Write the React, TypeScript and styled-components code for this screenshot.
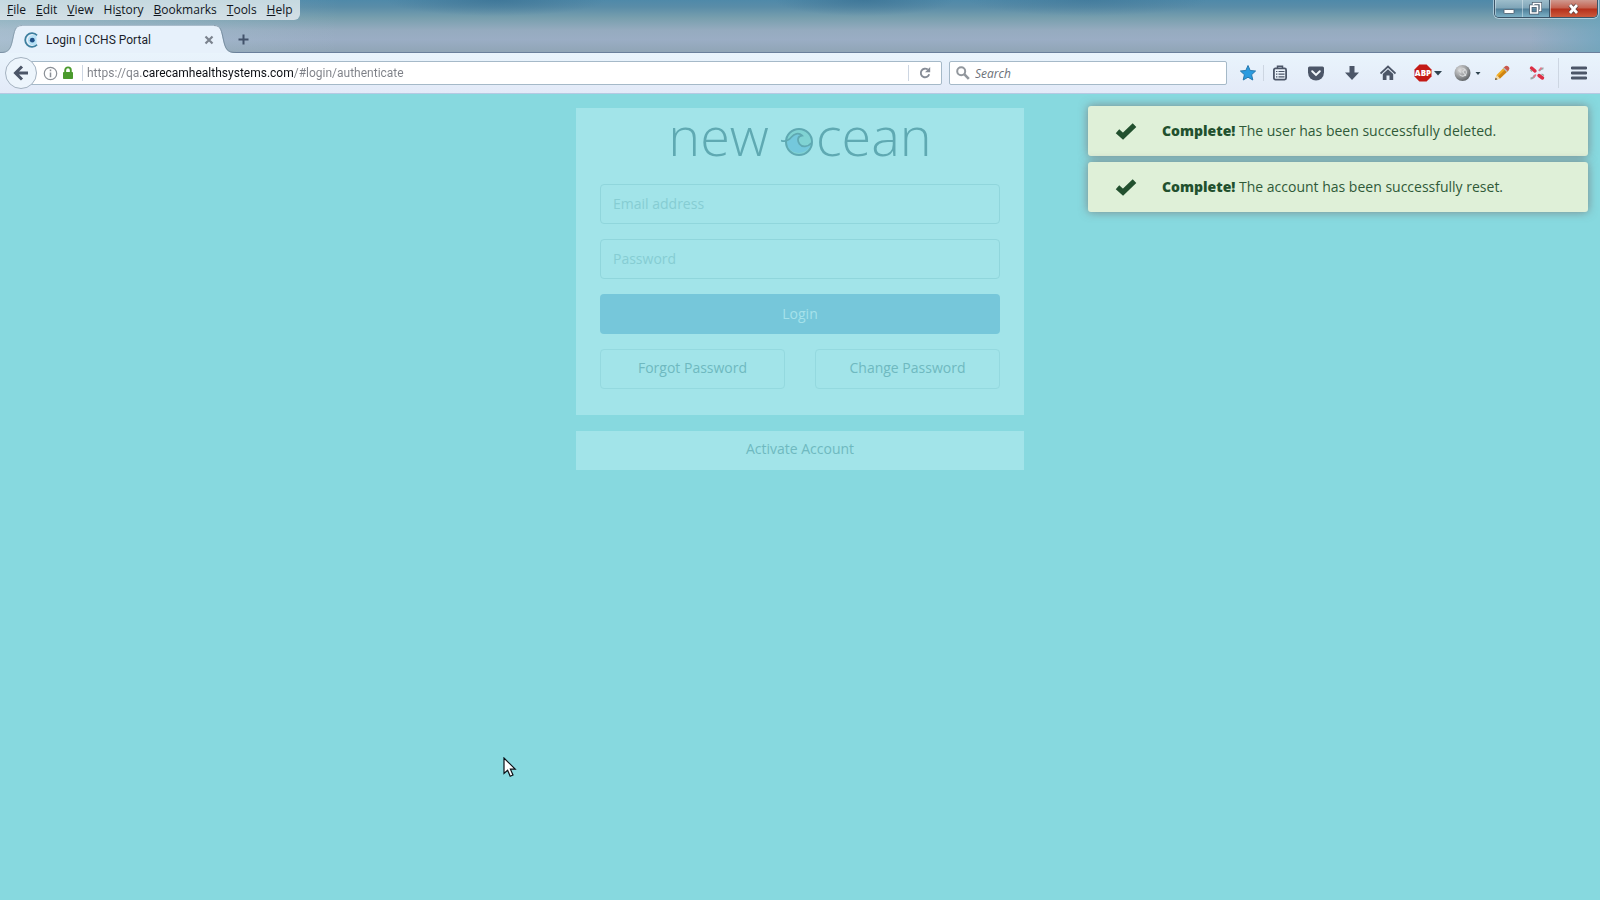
import React from "react";
import styled, { createGlobalStyle } from "styled-components";

const GlobalStyle = createGlobalStyle`
  *, *::before, *::after { box-sizing: border-box; }
  body {
    margin: 0;
    font-family: "Open Sans", "Noto Sans", sans-serif;
    font-size: 14px;
    background: #87d9df;
  }
  button, input { font-family: inherit; margin: 0; }
`;

/* ---------- browser frame ---------- */

const CHROME_FONT = `Roboto, "Open Sans", sans-serif`;

const Window = styled.div`
  display: flex;
  flex-direction: column;
  min-height: 100vh;
  overflow: hidden;
`;

const TitleBar = styled.header`
  height: 53px;
  border-bottom: 1px solid #6a7f9b;
  background:
    linear-gradient(90deg, rgba(190, 215, 225, 0.4) 0, rgba(190, 215, 225, 0) 340px),
    linear-gradient(90deg, rgba(105, 165, 190, 0) calc(100% - 70px), rgba(105, 165, 190, 0.7) 100%),
    radial-gradient(110px 16px at 31% 0, rgba(50, 105, 140, 0.55), rgba(50, 105, 140, 0)),
    radial-gradient(90px 16px at 54% 0, rgba(50, 105, 140, 0.55), rgba(50, 105, 140, 0)),
    radial-gradient(120px 16px at 68% 0, rgba(50, 105, 140, 0.4), rgba(50, 105, 140, 0)),
    linear-gradient(180deg, #4f89a9 0, #5a8da8 7px, #789fae 18px, #95abbf 30px, #9aadc4 40px, #90a5b6 52px);
`;

const TopRow = styled.div`
  display: flex;
  justify-content: space-between;
  align-items: flex-start;
  height: 20px;
`;

const MenuBar = styled.nav`
  display: flex;
  height: 20px;
  padding: 0 2px;
  border-radius: 0 0 6px 0;
  background: linear-gradient(180deg, #c5d9e0, #d3dfe5);
`;

const MenuButton = styled.button`
  border: 0;
  padding: 0 5px;
  background: none;
  font-size: 12px;
  line-height: 20px;
  color: #10151c;
`;

const WindowControls = styled.div`
  display: flex;
  height: 18px;
  margin-right: 2px;
  border: 1px solid #3b5468;
  border-top: 0;
  border-radius: 0 0 5px 5px;
  overflow: hidden;
  box-shadow: 0 0 0 1px rgba(215, 235, 245, 0.6);
`;

const ControlButton = styled.button<{ $close?: boolean }>`
  display: grid;
  place-items: center;
  width: ${(p) => (p.$close ? 48 : 27)}px;
  padding: 0;
  border: 0;
  border-left: ${(p) => (p.$close ? 1 : 0)}px solid #3b5468;
  background: ${(p) =>
    p.$close
      ? "linear-gradient(180deg, #cf9a90 0, #c4604e 8px, #b5301b 9px, #cc5a3c 17px)"
      : "linear-gradient(180deg, #9dbdcb 0, #7fa5b8 8px, #4f7f99 9px, #7cb0c5 17px)"};
  box-shadow: inset 1px 0 rgba(225, 240, 245, 0.5);
`;

const TabStrip = styled.div`
  display: flex;
  align-items: flex-end;
  height: 33px;
`;

const Tab = styled.div`
  display: flex;
  align-items: stretch;
  height: 28px;
`;

const TabEdge = styled.svg`
  display: block;
  width: 22px;
  height: 28px;
`;

const TabBody = styled.div`
  display: flex;
  align-items: center;
  width: 192px;
  padding-left: 2px;
  border-top: 1px solid #a9bccb;
  background: #e7f1fb;
`;

const TabTitle = styled.span`
  flex: 1;
  margin-left: 6px;
  font-family: ${CHROME_FONT};
  font-size: 12px;
  line-height: 16px;
  color: #1b1f2c;
`;

const PlainButton = styled.button`
  display: grid;
  place-items: center;
  padding: 0;
  border: 0;
  background: none;
`;

const NewTab = styled(PlainButton)`
  width: 14px;
  height: 28px;
`;

const Toolbar = styled.div`
  display: flex;
  align-items: center;
  height: 41px;
  padding: 0 1px 0 5px;
  border-bottom: 1px solid #b6c9e3;
  background: linear-gradient(180deg, #e9f4fc, #e3eaf8);
`;

const BackButton = styled(PlainButton)`
  z-index: 1;
  flex: none;
  width: 32px;
  height: 32px;
  border: 1px solid #a4b2c0;
  border-radius: 50%;
  background: #edf5fc;
`;

const Field = styled.div`
  display: flex;
  align-items: center;
  height: 24px;
  border: 1px solid #a5b9c8;
  border-radius: 2px;
  background: #fff;
`;

const AddressField = styled(Field)`
  flex: 1;
  gap: 4px;
  margin-left: -10px;
  padding-left: 15px;
`;

const SearchField = styled(Field)`
  flex: 0 0 278px;
  gap: 5px;
  margin-left: 7px;
  padding-left: 6px;
`;

const Divider = styled.span<{ $tall?: boolean }>`
  flex: none;
  width: 1px;
  height: ${(p) => (p.$tall ? 30 : 16)}px;
  background: #cdd6e2;
`;

const AddressInput = styled.input`
  flex: 1;
  min-width: 0;
  height: 20px;
  border: 0;
  padding: 0;
  outline: 0;
  font-family: ${CHROME_FONT};
  font-size: 12px;
  color: transparent;
  background: linear-gradient(90deg, #7d8087 55px, #0c0f14 55px 206px, #7d8087 206px);
  background-clip: text;
  -webkit-background-clip: text;
`;

const SearchInput = styled.input`
  flex: 1;
  min-width: 0;
  height: 20px;
  border: 0;
  padding: 0;
  outline: 0;
  background: none;
  font-size: 12px;
  &::placeholder { color: #6d7178; font-style: italic; opacity: 1; }
`;

const ReloadButton = styled(PlainButton)`
  width: 32px;
  height: 22px;
  margin-left: -4px;
`;

const Tools = styled.div`
  display: flex;
  align-items: center;
  margin-left: 5px;
`;

const ToolButton = styled(PlainButton)<{ $w?: number }>`
  width: ${(p) => p.$w ?? 36}px;
  height: 32px;
`;

/* ---------- page ---------- */

const Page = styled.main`
  flex: 1;
  padding: 14px 16px;
  background: #87d9df;
`;

const LoginColumn = styled.div`
  display: flex;
  flex-direction: column;
  gap: 16px;
  max-width: 448px;
  margin: 0 auto;
`;

const Card = styled.form`
  display: grid;
  grid-template-columns: 1fr 1fr;
  gap: 15px 30px;
  padding: 8px 24px 26px;
  background: #a2e4e9;
`;

const Wide = styled.div`
  grid-column: 1 / -1;
`;

const Logo = styled(Wide)`
  display: flex;
  justify-content: center;
  align-items: flex-start;
  height: 53px;
  font-weight: 300;
  font-size: 54px;
  line-height: 38px;
  color: #5fa9b2;
`;

const LogoMark = styled.svg`
  display: block;
  width: 34px;
  height: 32px;
  margin: 10px 1px 0 12px;
`;

const TextInput = styled.input`
  display: block;
  width: 100%;
  height: 40px;
  padding: 0 12px 2px;
  border: 1px solid #90d6dc;
  border-radius: 4px;
  outline: 0;
  background: transparent;
  font-size: 14px;
  color: #5fa9b2;
  &::placeholder { color: #86cdd3; opacity: 1; }
`;

const FormButton = styled.button<{ $kind: "primary" | "outline" | "plain" }>`
  width: 100%;
  height: ${(p) => (p.$kind === "plain" ? 39 : 40)}px;
  padding: ${(p) => ({ primary: "0 12px", outline: "0 12px 2px", plain: "0 12px 4px" })[p.$kind]};
  border: ${(p) => (p.$kind === "outline" ? "1px solid #94d9df" : "0")};
  border-radius: ${(p) => (p.$kind === "plain" ? 0 : 4)}px;
  background: ${(p) => (p.$kind === "primary" ? "#76c7da" : "#a2e4e9")};
  font-size: 14px;
  line-height: 20px;
  color: ${(p) => (p.$kind === "primary" ? "#a5e2ea" : "#6fb9c0")};
`;

/* ---------- overlays ---------- */

const ToastStack = styled.div`
  position: absolute;
  top: 106px;
  right: 12px;
  display: flex;
  flex-direction: column;
  gap: 6px;
  width: 500px;
`;

const ToastBox = styled.div`
  display: flex;
  align-items: center;
  height: 50px;
  padding-left: 27px;
  border-radius: 3px;
  background: #dff0d8;
  box-shadow: 0 0 10px rgba(120, 110, 110, 0.75);
  color: #2f5a38;
`;

const ToastText = styled.p`
  margin: 0 0 0 25px;
  font-size: 14px;
  line-height: 20px;
`;

const Strong = styled.strong`
  font-weight: 800;
  color: #22502e;
`;

const Pointer = styled.svg`
  position: absolute;
  left: 503px;
  top: 757px;
  width: 14px;
  height: 21px;
  pointer-events: none;
`;

const INK = "#4c5668";

const menus: [string, string, string][] = [
  ["", "F", "ile"],
  ["", "E", "dit"],
  ["", "V", "iew"],
  ["Hi", "s", "tory"],
  ["", "B", "ookmarks"],
  ["", "T", "ools"],
  ["", "H", "elp"],
];

function Toast({ message }: { message: string }) {
  return (
    <ToastBox role="status">
      <svg width="22" height="18" viewBox="0 0 22 18" aria-hidden="true">
        <path
          d="M2.500 9.300 8 14.200 19.500 3.200"
          fill="none"
          stroke="#22502e"
          strokeWidth="5.200"
        />
      </svg>
      <ToastText>
        <Strong>Complete!</Strong> {message}
      </ToastText>
    </ToastBox>
  );
}

function BrowserTop() {
  return (
    <TitleBar>
      <TopRow>
        <MenuBar aria-label="Menu bar">
          {menus.map(([pre, key, post]) => (
            <MenuButton key={key + post} type="button">
              {pre}
              <u>{key}</u>
              {post}
            </MenuButton>
          ))}
        </MenuBar>
        <WindowControls>
          <ControlButton type="button" aria-label="Minimize">
            <svg width="12" height="12" viewBox="0 0 12 12">
              <rect x="1" y="6.5" width="10" height="4" rx="0.5" fill="#fff" stroke="#46596a" strokeWidth="0.8" />
            </svg>
          </ControlButton>
          <ControlButton type="button" aria-label="Restore">
            <svg width="13" height="13" viewBox="0 0 13 13" fill="none">
              <path d="M4.5 3V1.5H11.5V8.5H10M1.8 4.2H8.5V11H1.8Z" stroke="#46596a" strokeWidth="3.2" />
              <path d="M4.5 3V1.5H11.5V8.5H10M1.8 4.2H8.5V11H1.8Z" stroke="#fff" strokeWidth="1.7" />
            </svg>
          </ControlButton>
          <ControlButton type="button" aria-label="Close" $close>
            <svg width="13" height="12" viewBox="0 0 13 12">
              <path d="M3 2 10 10M10 2 3 10" stroke="#5c4040" strokeWidth="4.2" />
              <path d="M3 2 10 10M10 2 3 10" stroke="#fff" strokeWidth="2.7" />
            </svg>
          </ControlButton>
        </WindowControls>
      </TopRow>
      <TabStrip>
        <Tab>
          <TabEdge viewBox="0 0 22 28" aria-hidden="true">
            <path d="M0 28C9 28 11 24 13 15S15 0 22 0V28Z" fill="#e7f1fb" />
            <path d="M0 27.5C9 27.5 10.500 24 12.500 15S15 0.500 22 0.500" fill="none" stroke="#7f95a6" strokeWidth="0.8" />
          </TabEdge>
          <TabBody>
            <svg width="16" height="16" viewBox="0 0 16 16" aria-hidden="true">
              <path d="M13 3.400A6.800 6.800 0 1 0 13 12.600" fill="none" stroke="#3d7f9f" strokeWidth="1.800" />
              <path d="M12.500 4.200A5.200 5.200 0 1 0 12.500 12Z" fill="#b5e0f5" />
              <circle cx="8.300" cy="8.200" r="2.400" fill="#1f4f86" />
            </svg>
            <TabTitle>Login | CCHS Portal</TabTitle>
            <PlainButton type="button" aria-label="Close tab">
              <svg width="10" height="10" viewBox="0 0 10 10">
                <path d="M1.500 1.500 8.500 8.500M8.500 1.500 1.500 8.500" stroke="#7b838e" strokeWidth="2.200" />
              </svg>
            </PlainButton>
          </TabBody>
          <TabEdge viewBox="0 0 22 28" aria-hidden="true">
            <path d="M22 28C13 28 11 24 9 15S7 0 0 0V28Z" fill="#e7f1fb" />
            <path d="M22 27.500C13 27.500 11.500 24 9.500 15S7 0.500 0 0.500" fill="none" stroke="#6f8598" strokeWidth="0.8" />
          </TabEdge>
        </Tab>
        <NewTab type="button" aria-label="New tab">
          <svg width="11" height="11" viewBox="0 0 11 11">
            <path d="M5.500 0.500V10.500M0.500 5.500H10.500" stroke="#42526a" strokeWidth="2" />
          </svg>
        </NewTab>
      </TabStrip>
    </TitleBar>
  );
}

function NavBar() {
  return (
    <Toolbar>
      <BackButton type="button" aria-label="Back">
        <svg width="16" height="16" viewBox="0 0 16 16" fill="none" stroke={INK} strokeWidth="3">
          <path d="M9 1.500 2.500 8 9 14.500M3 8H15" />
        </svg>
      </BackButton>
      <AddressField>
        <svg width="15" height="15" viewBox="0 0 15 15" aria-hidden="true">
          <circle cx="7.500" cy="7.500" r="6.200" fill="none" stroke="#8a8f96" strokeWidth="1.200" />
          <path d="M7.500 6.500V11.200M7.500 3.600V5.200" stroke="#8a8f96" strokeWidth="1.500" />
        </svg>
        <svg width="12" height="14" viewBox="0 0 12 14" aria-hidden="true">
          <path d="M3.200 7V4.200A2.800 2.800 0 0 1 8.800 4.200V7" fill="none" stroke="#4b9a2d" strokeWidth="1.900" />
          <rect x="1" y="6" width="10" height="7" rx="0.800" fill="#4b9a2d" />
        </svg>
        <span />
        <Divider />
        <AddressInput
          type="text"
          aria-label="Address"
          spellCheck={false}
          defaultValue="https://qa.carecamhealthsystems.com/#login/authenticate"
        />
        <Divider />
        <ReloadButton type="button" aria-label="Reload">
          <svg width="14" height="14" viewBox="0 0 14 14">
            <path d="M9.800 3.600A4.300 4.300 0 1 0 11.200 8.300" fill="none" stroke="#868c96" strokeWidth="1.900" />
            <path d="M12.200 1V6.200H7Z" fill="#868c96" />
          </svg>
        </ReloadButton>
      </AddressField>
      <SearchField>
        <svg width="14" height="14" viewBox="0 0 14 14" aria-hidden="true" fill="none" stroke="#92979d">
          <circle cx="5.200" cy="5.200" r="4" strokeWidth="2" />
          <path d="M8.200 8.200 12.800 12.800" strokeWidth="2.600" />
        </svg>
        <SearchInput type="text" aria-label="Search" placeholder="Search" />
      </SearchField>
      <Tools>
        <ToolButton $w={31} type="button" aria-label="Bookmarked">
          <svg width="18" height="18" viewBox="0 0 18 18">
            <path
              d="M9 1.500 11.200 6.500 16.600 7 12.600 10.700 13.800 16 9 13.200 4.200 16 5.400 10.700 1.400 7 6.800 6.500Z"
              fill="#2a9be0"
              stroke="#2679ae"
              strokeWidth="1"
              strokeLinejoin="round"
            />
          </svg>
        </ToolButton>
        <Divider />
        <ToolButton $w={32} type="button" aria-label="Bookmarks list">
          <svg width="16" height="16" viewBox="0 0 16 16">
            <path d="M5.500 3V1.200H10.500V3" fill="none" stroke={INK} strokeWidth="1.500" />
            <rect x="1.900" y="3.400" width="12.200" height="11.200" rx="1.500" fill="#eaf2fa" stroke={INK} strokeWidth="1.800" />
            <path d="M6.500 6.500H12.500M6.500 9.200H12.500M6.500 11.900H12.500M4 6.500H5.400M4 9.200H5.400M4 11.900H5.400" stroke={INK} strokeWidth="1.200" />
          </svg>
        </ToolButton>
        <ToolButton $w={40} type="button" aria-label="Save to Pocket">
          <svg width="16" height="15" viewBox="0 0 16 15">
            <path d="M1.500 0.500H14.500Q16 0.500 16 2V6.500A8 8 0 0 1 0 6.500V2Q0 0.500 1.500 0.500Z" fill={INK} />
            <path d="M4.200 5.300 8 8.900 11.800 5.300" fill="none" stroke="#f2f7fc" strokeWidth="2" strokeLinecap="round" />
          </svg>
        </ToolButton>
        <ToolButton $w={32} type="button" aria-label="Downloads">
          <svg width="14" height="16" viewBox="0 0 14 16">
            <path d="M4.500 1H9.500V7.500H14L7 15 0 7.500H4.500Z" fill={INK} />
          </svg>
        </ToolButton>
        <ToolButton $w={40} type="button" aria-label="Home">
          <svg width="16" height="16" viewBox="0 0 16 16">
            <path d="M0.500 8.500 8 1.500 15.500 8.500" fill="none" stroke={INK} strokeWidth="1.800" />
            <path d="M2.800 9 8 4.300 13.200 9V15H9.500V10.500H6.500V15H2.800Z" fill={INK} />
          </svg>
        </ToolButton>
        <ToolButton $w={40} type="button" aria-label="Adblock Plus">
          <svg width="28" height="18" viewBox="0 0 28 18">
            <path d="M5.400 0.500H12.600L17.500 5.400V12.600L12.600 17.500H5.400L0.500 12.600V5.400Z" fill="#c41a16" />
            <text x="9" y="12" textAnchor="middle" fontFamily="Open Sans" fontWeight="800" fontSize="8" fill="#fff">
              ABP
            </text>
            <path d="M20 7H28L24 11.500Z" fill="#2f4450" />
          </svg>
        </ToolButton>
        <ToolButton $w={40} type="button" aria-label="Proxy">
          <svg width="28" height="18" viewBox="0 0 28 18">
            <defs>
              <radialGradient id="globe" cx="0.35" cy="0.3" r="0.75">
                <stop offset="0" stopColor="#dcdcdc" />
                <stop offset="0.5" stopColor="#a0a2a4" />
                <stop offset="1" stopColor="#5d6164" />
              </radialGradient>
            </defs>
            <circle cx="8.500" cy="9" r="8" fill="url(#globe)" />
            <path
              d="M8.500 4.500A3.800 3.800 0 1 1 5.500 10.500M4.500 6 7 8.500M9 8 12 12M11 5.500 8.500 8"
              fill="none"
              stroke="#d9dbdc"
              strokeWidth="1.100"
            />
            <path d="M21.500 8H26.500L24 11Z" fill="#2f4450" />
          </svg>
        </ToolButton>
        <ToolButton $w={28} type="button" aria-label="Edit page">
          <svg width="16" height="16" viewBox="0 0 16 16">
            <path d="M1 15 2.600 10 11 1.600 14.600 5.200 6 13.500Z" fill="#f0ac22" />
            <path d="M4 11.500 12.500 3.200 14.600 5.200 6 13.500Z" fill="#cf8413" />
            <path d="M9.500 3 11.500 1Q12.800 0.200 14 1.200L15 2.200Q15.900 3.300 15 4.600L13 6.600Z" fill="#c9574e" />
            <path d="M9 3.500 10 2.500 13.600 6.100 12.600 7.100Z" fill="#b9bcc0" />
            <path d="M2.600 10 1 15 6 13.500Z" fill="#f4d9a8" />
            <path d="M1.700 12.700 1 15 3.400 14.300Z" fill="#51422f" />
          </svg>
        </ToolButton>
        <ToolButton $w={42} type="button" aria-label="Extension">
          <svg width="16" height="16" viewBox="0 0 16 16" fill="none">
            <path d="M1.500 13.500Q4.500 13.500 6 10M10 6Q12 3 14.500 3.500" stroke="#9aa6a3" strokeWidth="2" />
            <path d="M10 5.500 12.500 2.500M4.500 12.500 7 9.500" stroke="#e9748a" strokeWidth="1.500" />
            <path d="M2.500 3 6 6M10 10.500 13.500 13" stroke="#dd2f45" strokeWidth="3.400" strokeLinecap="round" />
            <path d="M1.500 5 3 6.500M12.500 9 15 10.500" stroke="#8ea49a" strokeWidth="1.200" />
          </svg>
        </ToolButton>
        <Divider $tall />
        <ToolButton $w={40} type="button" aria-label="Open menu">
          <svg width="16" height="14" viewBox="0 0 16 14">
            <path d="M1 2H15M1 7H15M1 12H15" stroke={INK} strokeWidth="2.800" strokeLinecap="round" />
          </svg>
        </ToolButton>
      </Tools>
    </Toolbar>
  );
}

export default function App() {
  return (
    <Window>
      <GlobalStyle />
      <BrowserTop />
      <NavBar />
      <Page>
        <LoginColumn>
          <Card onSubmit={(e) => e.preventDefault()}>
            <Logo>
              <span>new</span>
              <LogoMark viewBox="0 0 34 32" aria-hidden="true">
                <circle cx="18" cy="16" r="13" fill="#80d3d3" />
                <path
                  d="M5 16C9 15 10 9 16 7.500 19 7 21 9 21 10 17 10 16 14 18.500 17.500 21 21 27 21 30.500 17A13 13 0 0 1 5 16Z"
                  fill="#74c8dc"
                />
                <circle cx="18" cy="16" r="13" fill="none" stroke="#5fa9b2" strokeWidth="2" />
                <path
                  d="M0 14.500C5 16.500 8 14 10.500 11 13 8 17.500 6 21 9.500 16.500 10 16 14.500 18.500 18 21 21.500 27 21 30.500 17"
                  fill="none"
                  stroke="#5fa9b2"
                  strokeWidth="1.800"
                />
              </LogoMark>
              <span>cean</span>
            </Logo>
            <Wide>
              <TextInput aria-label="Email address" type="email" placeholder="Email address" />
            </Wide>
            <Wide>
              <TextInput aria-label="Password" type="password" placeholder="Password" />
            </Wide>
            <Wide>
              <FormButton $kind="primary" type="submit">Login</FormButton>
            </Wide>
            <FormButton $kind="outline" type="button">Forgot Password</FormButton>
            <FormButton $kind="outline" type="button">Change Password</FormButton>
          </Card>
          <FormButton $kind="plain" type="button">Activate Account</FormButton>
        </LoginColumn>
      </Page>
      <ToastStack>
        <Toast message="The user has been successfully deleted." />
        <Toast message="The account has been successfully reset." />
      </ToastStack>
      <Pointer viewBox="0 0 14 21" aria-hidden="true">
        <path
          d="M1 1V16.500L4.600 13.200 7.200 19.200 10 18 7.400 12.200H12.200Z"
          fill="#fff"
          stroke="#0b1016"
          strokeWidth="1.200"
        />
      </Pointer>
    </Window>
  );
}
